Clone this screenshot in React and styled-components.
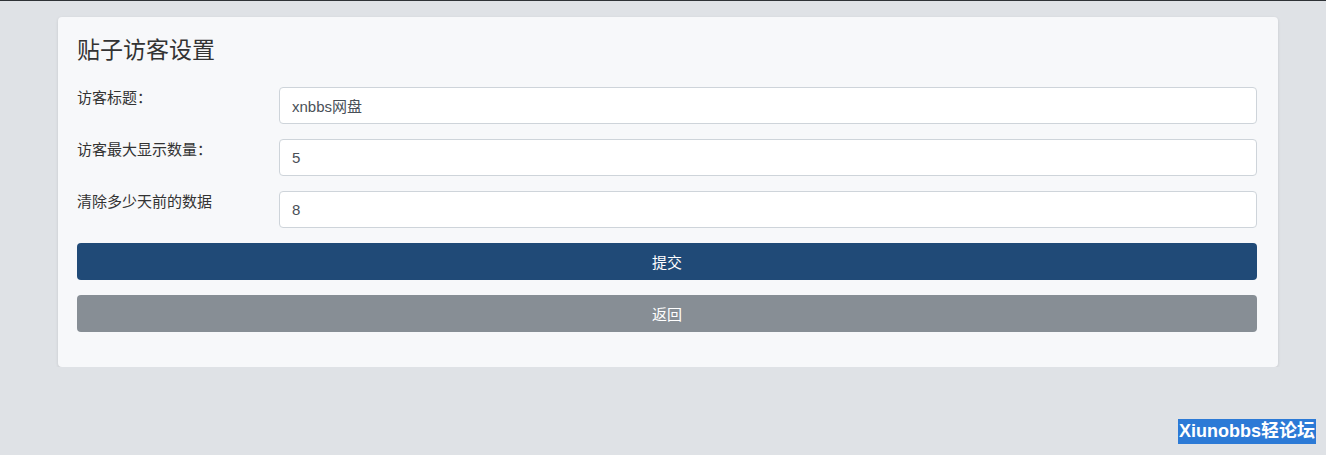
import React, { useState } from "react";
import styled, { createGlobalStyle } from "styled-components";

const GlobalStyle = createGlobalStyle`
  html, body {
    margin: 0;
    padding: 0;
  }
  body {
    background-color: #dfe2e6;
    border-top: 1px solid #2e3236;
    font-family: "Liberation Sans", "Noto Sans CJK SC", sans-serif;
    font-size: 15px;
    color: #333;
  }
`;

const App = () => {
  // 表单数据
  const [form, setForm] = useState({
    title: "xnbbs网盘",
    max: "5",
    days: "8",
  });

  const changeHandler = (e) => {
    const { name, value } = e.target;
    setForm({ ...form, [name]: value });
  };

  const fields = [
    { name: "title", label: "访客标题：" },
    { name: "max", label: "访客最大显示数量：" },
    { name: "days", label: "清除多少天前的数据" },
  ];

  return (
    <>
      <GlobalStyle />
      <StPage>
        <StCard>
          <StTitle>贴子访客设置</StTitle>
          <StForm onSubmit={(e) => e.preventDefault()}>
            {fields.map((f) => (
              <StRow key={f.name}>
                <StLabel htmlFor={f.name}>{f.label}</StLabel>
                <StInput id={f.name} name={f.name} value={form[f.name]} onChange={changeHandler} />
              </StRow>
            ))}
            <StButton type="submit" $variant="primary">提交</StButton>
            <StButton type="button" $variant="secondary">返回</StButton>
          </StForm>
        </StCard>
      </StPage>
      <StBadge>Xiunobbs轻论坛</StBadge>
    </>
  );
};

export default App;

const StPage = styled.div`
  padding: 16px 48px 0 58px;
`;

const StCard = styled.div`
  width: 1220px;
  box-sizing: border-box;
  padding: 20px 21px 35px 19px;
  background-color: #f7f8fa;
  border-radius: 4px;
  box-shadow: 0 1px 3px rgba(0, 0, 0, 0.12);
`;

const StTitle = styled.h4`
  margin: 0 0 24px;
  font-size: 23px;
  font-weight: 400;
  line-height: 26px;
  color: #333;
`;

const StForm = styled.form`
  display: flex;
  flex-direction: column;
  gap: 15px;
`;

const StRow = styled.div`
  display: grid;
  grid-template-columns: 202px 1fr;
  align-items: start;
`;

const StLabel = styled.label`
  font-size: 15px;
  line-height: 21px;
  color: #333;
`;

const StInput = styled.input`
  height: 37px;
  box-sizing: border-box;
  padding: 0 12px;
  border: 1px solid #ced4da;
  border-radius: 4px;
  background-color: #fff;
  font-family: inherit;
  font-size: 15px;
  color: #495057;
  outline: none;
`;

const StButton = styled.button`
  height: 37px;
  border: none;
  border-radius: 4px;
  cursor: pointer;
  font-family: inherit;
  font-size: 15px;
  color: #fff;
  background-color: ${(p) => (p.$variant === "primary" ? "#204a77" : "#878e95")};
`;

const StBadge = styled.div`
  position: fixed;
  right: 10px;
  bottom: 11px;
  padding: 0 1px;
  height: 25px;
  line-height: 25px;
  background-color: #2c7ad6;
  color: #fff;
  font-size: 18px;
  font-weight: 700;
`;
